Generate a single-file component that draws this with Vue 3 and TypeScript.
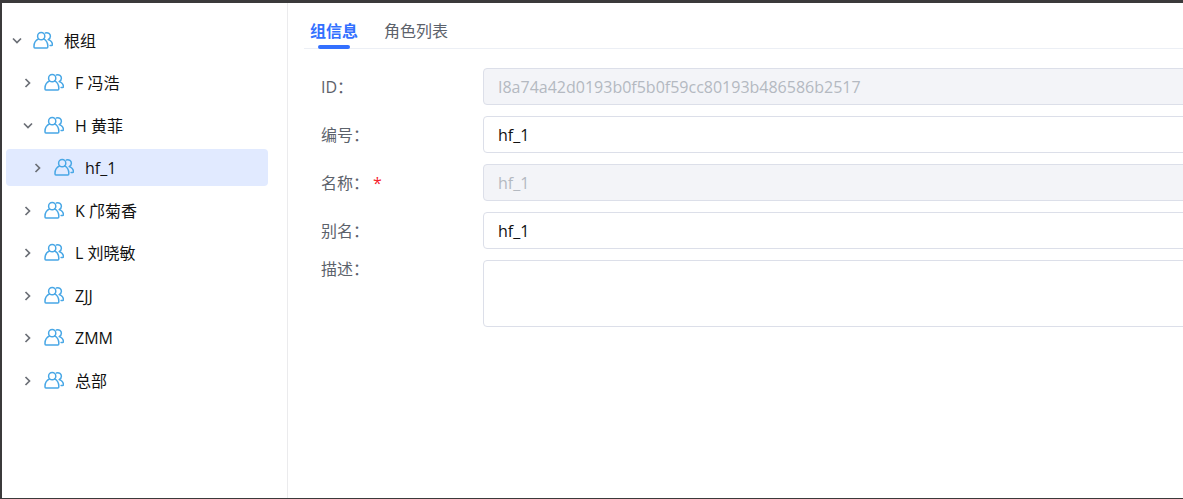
<script setup lang="ts">
import { ref } from 'vue'

interface TreeNode {
  id: string
  label: string
  level: number
  expanded: boolean
}

interface Field {
  id: string
  label: string
  value: string
  disabled?: boolean
  required?: boolean
}

const nodes: TreeNode[] = [
  { id: 'root', label: '根组', level: 0, expanded: true },
  { id: 'f', label: 'F 冯浩', level: 1, expanded: false },
  { id: 'h', label: 'H 黄菲', level: 1, expanded: true },
  { id: 'hf1', label: 'hf_1', level: 2, expanded: false },
  { id: 'k', label: 'K 邝菊香', level: 1, expanded: false },
  { id: 'l', label: 'L 刘晓敏', level: 1, expanded: false },
  { id: 'zjj', label: 'ZJJ', level: 1, expanded: false },
  { id: 'zmm', label: 'ZMM', level: 1, expanded: false },
  { id: 'hq', label: '总部', level: 1, expanded: false },
]

const tabs = ['组信息', '角色列表']

const fields = ref<Field[]>([
  { id: 'gid', label: 'ID：', value: 'I8a74a42d0193b0f5b0f59cc80193b486586b2517', disabled: true },
  { id: 'code', label: '编号：', value: 'hf_1' },
  { id: 'name', label: '名称：', value: 'hf_1', disabled: true, required: true },
  { id: 'alias', label: '别名：', value: 'hf_1' },
])

const selected = ref('hf1')
const activeTab = ref(0)
const description = ref('')
</script>

<template>
  <div class="page">
    <aside class="sidebar">
      <ul class="tree" role="tree">
        <li v-for="node in nodes" :key="node.id" role="none">
          <button
            type="button"
            role="treeitem"
            class="node"
            :class="['level-' + node.level, { selected: node.id === selected }]"
            :aria-level="node.level + 1"
            :aria-expanded="node.expanded"
            :aria-selected="node.id === selected"
            @click="selected = node.id"
          >
            <svg class="arrow" :class="{ open: node.expanded }" viewBox="0 0 12 12" aria-hidden="true">
              <path d="M3.500 2l4 4-4 4" />
            </svg>
            <svg class="people" viewBox="0 0 20 20" aria-hidden="true">
              <circle cx="8.200" cy="5.200" r="3.600" />
              <path d="M5.600 7.900C2.800 9.200 1 12 1 15.200v.9c0 .6.300.9.900.9h12c.6 0 .9-.3.900-.9v-.9c0-3.200-1.600-6-4.300-7.300" />
              <path d="M12.400 1.900c2.700-.7 5 .9 5 3.300 0 1.500-.8 2.700-2.200 3.400 2.600.8 4.200 2.800 4.200 5.200 0 .5-.3.800-.8.800h-1.500" />
            </svg>
            <span class="text">{{ node.label }}</span>
          </button>
        </li>
      </ul>
    </aside>

    <main class="content">
      <div class="tabs" role="tablist">
        <button
          v-for="(tab, i) in tabs"
          :key="tab"
          type="button"
          role="tab"
          class="tab"
          :class="{ active: i === activeTab }"
          :aria-selected="i === activeTab"
          @click="activeTab = i"
        >
          {{ tab }}
        </button>
      </div>

      <form class="form" @submit.prevent>
        <div v-for="field in fields" :key="field.id" class="row">
          <label :for="field.id">{{ field.label }}<span v-if="field.required" class="star">*</span></label>
          <input :id="field.id" v-model="field.value" type="text" :disabled="field.disabled" />
        </div>
        <div class="row top">
          <label for="desc">描述：</label>
          <textarea id="desc" v-model="description"></textarea>
        </div>
      </form>
    </main>
  </div>
</template>

<style>
body {
  margin: 0;
}
</style>

<style scoped>
.page {
  box-sizing: border-box;
  display: flex;
  min-height: 100vh;
  overflow: hidden;
  border: solid #3b3a3b;
  border-width: 3px 0 1px 2px;
  background: #fff;
  font-family: "Open Sans", "Noto Sans CJK SC", sans-serif;
  font-size: 16px;
}

button,
input,
textarea {
  font: inherit;
}

.sidebar {
  box-sizing: border-box;
  flex: 0 0 286px;
  padding: 19px 19px 0 4px;
  border-right: 1px solid #ebebed;
}

.tree {
  margin: 0;
  padding: 0;
  list-style: none;
}

.tree li {
  margin-bottom: 5px;
}

.tree li:nth-child(even) {
  margin-bottom: 6px;
}

.node {
  display: flex;
  align-items: center;
  width: 100%;
  height: 37px;
  padding: 0 5px;
  border: 0;
  border-radius: 4px;
  background: none;
  color: #111;
  text-align: left;
  cursor: pointer;
}

.level-1 {
  padding-left: 16px;
}

.level-2 {
  padding-left: 26px;
}

.selected {
  background: #e1eaff;
}

.arrow {
  width: 12px;
  height: 12px;
  margin-right: 10px;
  fill: none;
  stroke: #6b6f76;
  stroke-width: 1.7;
}

.arrow.open {
  transform: rotate(90deg);
}

.people {
  width: 20px;
  height: 20px;
  margin-right: 11px;
  fill: none;
  stroke: #48a7e6;
  stroke-width: 1.5;
  stroke-linecap: round;
  stroke-linejoin: round;
}

.text {
  line-height: 24px;
}

.content {
  flex: 1;
  min-width: 0;
  padding: 16px 0 0 16px;
}

.tabs {
  display: flex;
  gap: 26px;
  padding-left: 6px;
  border-bottom: 1px solid #eceff5;
}

.tab {
  position: relative;
  height: 29px;
  padding: 0 0 5px;
  border: 0;
  background: none;
  color: #5c626b;
  line-height: 24px;
  cursor: pointer;
}

.tab.active {
  color: #3370ff;
  font-weight: 700;
}

.tab.active::after {
  content: "";
  position: absolute;
  bottom: -1px;
  left: 8px;
  right: 8px;
  height: 4px;
  border-radius: 2px;
  background: #3370ff;
}

.form {
  display: flex;
  flex-direction: column;
  gap: 11px;
  margin-right: -8px;
  padding: 19px 0 0 17px;
}

.row {
  display: flex;
  align-items: center;
}

.row.top {
  align-items: flex-start;
}

label {
  flex: 0 0 162px;
  color: #5c626b;
  line-height: 18px;
}

.star {
  margin-left: 4px;
  color: #f5222d;
}

input,
textarea {
  box-sizing: border-box;
  flex: 1;
  min-width: 0;
  padding: 0 14px;
  border: 1px solid #dcdfe9;
  border-radius: 4px;
  background: #fff;
  color: #111;
}

input {
  height: 37px;
}

input:disabled {
  background: #f3f4f8;
  color: #b4b9c1;
}

textarea {
  height: 67px;
  resize: none;
}
</style>
